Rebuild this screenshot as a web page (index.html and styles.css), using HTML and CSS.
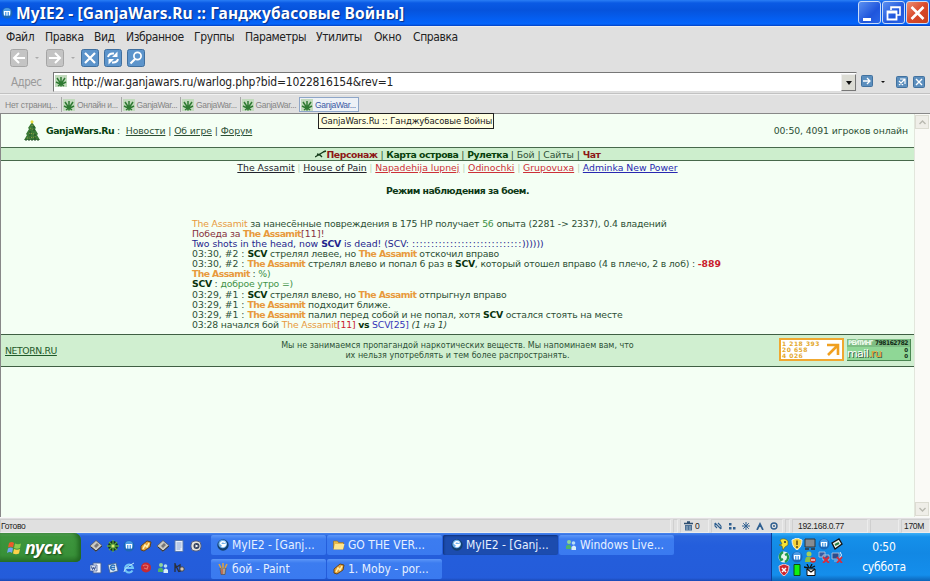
FILE: index.html
```html
<!DOCTYPE html>
<html lang="ru">
<head>
    <meta charset="UTF-8">
    <title>GanjaWars.Ru :: Ганджубасовые Войны</title>
    <link rel="stylesheet" href="styles.css">
</head>
<body>
    <svg class="defs" width="0" height="0">
        <symbol id="leaf" viewBox="0 0 12 12">
            <rect width="12" height="12" fill="#c2dabd"/>
            <path d="M6 11.500V2M6 9L2 3M6 9l4-6M6 9.500L1 7M6 9.500L11 7M6 9l-3 2M6 9l3 2" stroke="#2f7a33" stroke-width="1.500" fill="none"/>
        </symbol>
        <symbol id="disk" viewBox="0 0 12 12">
            <path d="M0 6l6-5.500 6 5L6 11.500z" fill="#c9c9c4" stroke="#555" stroke-width=".8"/>
            <path d="M1 7l5 4 6-5" stroke="#333" fill="none"/>
            <path d="M4 6l3-3 2 2-3 3z" fill="#777"/>
        </symbol>
        <symbol id="amp" viewBox="0 0 12 12">
            <path d="M1 6l6-5 4 1-1 5-6 4-3-1z" fill="#e8a33a" stroke="#5c3c12" stroke-width=".9"/>
            <path d="M3 9l2-4 2 2 2-4" stroke="#fff3b0" stroke-width="1.500" fill="none"/>
        </symbol>
        <symbol id="myie" viewBox="0 0 12 12">
            <circle cx="6" cy="6" r="5.500" fill="#1c66b5"/>
            <circle cx="6" cy="5" r="4" fill="#4c9ce6"/>
            <path d="M3.500 8.500V4.500h5v4M6 4.500v4" stroke="#fff" fill="none" stroke-width="1.200"/>
        </symbol>
        <symbol id="globe" viewBox="0 0 12 12">
            <circle cx="6" cy="6" r="5.700" fill="#12406f"/>
            <circle cx="5.700" cy="5" r="4.300" fill="#6fb2ea"/>
            <path d="M8.500 3.500q-4-2-5 1 1 2 5 1-1 3-4 1.500" stroke="#fff" stroke-width="1.600" fill="none"/>
        </symbol>
        <symbol id="people" viewBox="0 0 12 12">
            <circle cx="4" cy="3" r="2" fill="#8fd49a"/>
            <circle cx="8.500" cy="4" r="1.800" fill="#b6ddf5"/>
            <path d="M1 10V7q3-3 5 0v3z" fill="#4eb46a"/>
            <path d="M6.500 11V8q2.500-3 4.500 0v3z" fill="#d8eefa"/>
        </symbol>
    </svg>

    <div class="titlebar">
        <svg class="title-icon" width="12" height="12"><use href="#myie"/></svg>
        <div class="title">MyIE2 - [GanjaWars.Ru :: Ганджубасовые Войны]</div>
        <div class="win-btn">
            <svg width="21" height="22" viewBox="0 0 21 22"><path d="M4 17.500h8" stroke="#fff" stroke-width="3"/></svg>
        </div>
        <div class="win-btn">
            <svg width="21" height="22" viewBox="0 0 21 22"><path d="M8 8V5h9v8h-3M8 5.500h9" stroke="#fff" stroke-width="1.600" fill="none"/><path d="M4.500 9.500h9v8h-9zM4 10.500h9.500" stroke="#fff" stroke-width="1.800" fill="none"/></svg>
        </div>
        <div class="win-btn close">
            <svg width="21" height="22" viewBox="0 0 21 22"><path d="M4.500 5l12 12M16.500 5l-12 12" stroke="#fff" stroke-width="2.600"/></svg>
        </div>
    </div>

    <div class="menubar">
        <span class="m1">Файл</span>
        <span class="m2">Правка</span>
        <span class="m3">Вид</span>
        <span class="m4">Избранное</span>
        <span class="m5">Группы</span>
        <span class="m6">Параметры</span>
        <span class="m7">Утилиты</span>
        <span class="m8">Окно</span>
        <span class="m9">Справка</span>
    </div>

    <div class="toolbar">
        <svg class="nav" width="18" height="18" viewBox="0 0 18 18"><rect x=".5" y=".5" width="17" height="17" rx="2" fill="#c4c4c4" stroke="#a5a5a5"/><path d="M15 9H4M9 4L4 9l5 5" stroke="#fff" stroke-width="2" fill="none"/></svg>
        <i class="tick"></i>
        <svg class="nav" width="18" height="18" viewBox="0 0 18 18"><rect x=".5" y=".5" width="17" height="17" rx="2" fill="#c4c4c4" stroke="#a5a5a5"/><path d="M3 9h11M9 4l5 5-5 5" stroke="#fff" stroke-width="2" fill="none"/></svg>
        <i class="tick"></i>
        <svg class="tool" width="18" height="18" viewBox="0 0 18 18"><rect x=".5" y=".5" width="17" height="17" rx="2" fill="#5c94cb" stroke="#3f6f9f"/><path d="M4 4l10 10M14 4L4 14" stroke="#fff" stroke-width="2.200"/></svg>
        <svg class="tool" width="18" height="18" viewBox="0 0 18 18"><rect x=".5" y=".5" width="17" height="17" rx="2" fill="#5c94cb" stroke="#3f6f9f"/><path d="M4 8q1-4 6-3.500M14 10q-1 4-6 3.500" stroke="#fff" stroke-width="2" fill="none"/><path d="M13.500 2.500v5.500h-5.500zM4.500 15.500v-5.500h5.500z" fill="#fff"/></svg>
        <svg class="tool" width="18" height="18" viewBox="0 0 18 18"><rect x=".5" y=".5" width="17" height="17" rx="2" fill="#5c94cb" stroke="#3f6f9f"/><circle cx="10.500" cy="7" r="3.600" stroke="#fff" stroke-width="1.700" fill="none"/><path d="M8 10l-4.500 4.500" stroke="#fff" stroke-width="2.200"/></svg>
    </div>

    <div class="address">
        <label>Адрес</label>
        <div class="url">
            <svg width="12" height="12"><use href="#leaf"/></svg>
            <span>http://war.ganjawars.ru/warlog.php?bid=1022816154&amp;rev=1</span>
            <button class="drop"></button>
        </div>
        <svg class="go" width="12" height="12" viewBox="0 0 12 12"><rect x=".5" y=".5" width="11" height="11" rx="1" fill="#5c8fbe" stroke="#41719f"/><path d="M2 6h7M6 3l3 3-3 3" stroke="#fff" stroke-width="1.300" fill="none"/></svg>
        <i class="tick dark"></i>
        <svg class="pop" width="12" height="12" viewBox="0 0 12 12"><rect x=".5" y=".5" width="11" height="11" rx="1" fill="#5c8fbe" stroke="#41719f"/><path d="M4 3h5v5M9 3L6 6M3 5l4 4M7 5L3 9" stroke="#fff" stroke-width="1.200" fill="none"/></svg>
        <svg width="12" height="12" viewBox="0 0 12 12"><rect x=".5" y=".5" width="11" height="11" rx="1" fill="#5c8fbe" stroke="#41719f"/><path d="M3 3l6 6M9 3L3 9" stroke="#fff" stroke-width="1.400"/></svg>
    </div>

    <div class="tabs">
        <div class="tab first">Нет страниц...</div>
        <div class="tab"><svg width="12" height="12"><use href="#leaf"/></svg><span>Онлайн и...</span></div>
        <div class="tab"><svg width="12" height="12"><use href="#leaf"/></svg><span>GanjaWar...</span></div>
        <div class="tab"><svg width="12" height="12"><use href="#leaf"/></svg><span>GanjaWar...</span></div>
        <div class="tab"><svg width="12" height="12"><use href="#leaf"/></svg><span>GanjaWar...</span></div>
        <div class="tab active"><svg width="12" height="12"><use href="#leaf"/></svg><span>GanjaWar...</span>
            <div class="tooltip">GanjaWars.Ru :: Ганджубасовые Войны</div>
        </div>
    </div>

    <div class="view">
        <div class="page">
            <div class="header">
                <svg width="18" height="22" viewBox="0 0 18 22">
                    <path d="M9 2l4 6-1 1 3 5-1 1 3 5H1l3-5-1-1 3-5-1-1z" fill="#3b7a36"/>
                    <path d="M9 3v4M7 8l4 2M6 13l5 1M4 18l9-1" stroke="#9a9e48" stroke-dasharray="1 1"/>
                    <path d="M11 6v5M7 11v7M12 14v5M2 20h14" stroke="#204b26" stroke-dasharray="2 1"/>
                    <circle cx="9" cy="1.800" r="1.500" fill="#e5dc3f"/>
                </svg>
                <div class="site-links"><b>GanjaWars.Ru</b> :&nbsp; <a>Новости</a> | <a>Об игре</a> | <a>Форум</a></div>
                <div class="online">00:50, 4091 игроков онлайн</div>
            </div>
            <div class="nav-strip">
                <svg width="12" height="8" viewBox="0 0 12 8"><path d="M0 7l5-3 5-3M4 4l3 3M2 4l3 1M8 2l3-1" stroke="#163d1b" stroke-width="1.400" fill="none"/></svg><span><b class="maroon">Персонаж</b> | <b>Карта острова</b> | <b>Рулетка</b> | Бой | Сайты | <b class="maroon">Чат</b></span>
            </div>
            <div class="clans"><a class="black">The Assamit</a> <i>|</i> <a class="black">House of Pain</a> <i>|</i> <a class="red">Napadehija lupnej</a> <i>|</i> <a class="red">Odinochki</a> <i>|</i> <a class="red">Grupovuxa</a> <i>|</i> <a class="blue">Adminka New Power</a></div>
            <div class="mode">Режим наблюдения за боем.</div>
            <div class="log">
                <div><span class="orange">The Assamit</span> за нанесённые повреждения в 175 HP получает <span class="green">56</span> опыта (2281 -&gt; 2337), 0.4 владений</div>
                <div class="wine">Победа за <b class="orange">The Assamit</b><span class="level">[11]</span>!</div>
                <div class="navy">Two shots in the head, now <b>SCV</b> is dead! (SCV: <span class="dots">:::::::::::::::::::::::::::::</span>))))))</div>
                <div><span class="time">03:30, #2 : </span><b class="dark">SCV</b> стрелял левее, но <b class="orange">The Assamit</b> отскочил вправо</div>
                <div><span class="time">03:30, #2 : </span><b class="orange">The Assamit</b> стрелял влево и попал 6 раз в <b class="dark">SCV</b>, который отошел вправо (4 в плечо, 2 в лоб) : <b class="crimson">-889</b></div>
                <div><b class="orange">The Assamit</b> : <span class="green">%)</span></div>
                <div><b class="dark">SCV</b> : <span class="green">доброе утро =)</span></div>
                <div><span class="time">03:29, #1 : </span><b class="dark">SCV</b> стрелял влево, но <b class="orange">The Assamit</b> отпрыгнул вправо</div>
                <div><span class="time">03:29, #1 : </span><b class="orange">The Assamit</b> подходит ближе.</div>
                <div><span class="time">03:29, #1 : </span><b class="orange">The Assamit</b> палил перед собой и не попал, хотя <b class="dark">SCV</b> остался стоять на месте</div>
                <div>03:28 начался бой <span class="orange">The Assamit</span><span class="crimson">[11]</span> <b class="dark">vs</b> <span class="link-blue">SCV[25]</span> <em>(1 на 1)</em></div>
            </div>
            <div class="footer">
                <a>NETORN.RU</a>
                <p>Мы не занимаемся пропагандой наркотических веществ. Мы напоминаем вам, что<br>их нельзя употреблять и тем более распространять.</p>
                <div class="counter">
                    <div>1 218 393<br>20 658<br>4 026</div>
                    <svg width="14" height="14" viewBox="0 0 14 14"><path d="M1 2h11v10M12 2L2 12" stroke="#f0a020" stroke-width="2.600" fill="none"/></svg>
                </div>
                <div class="rating">
                    <div class="rating-top"><span>РЕЙТИНГ</span><b>798162782</b></div>
                    <div class="rating-bottom"><span class="mail">mail<em>.ru</em></span><b>0<br>0</b></div>
                </div>
            </div>
        </div>
        <div class="scrollbar">
            <div class="arrow"><svg width="7" height="5" viewBox="0 0 7 5"><path d="M.5 4l3-3 3 3" stroke="#b9b9b0" stroke-width="1.400" fill="none"/></svg></div>
            <div class="arrow"><svg width="7" height="5" viewBox="0 0 7 5"><path d="M.5 1l3 3 3-3" stroke="#b9b9b0" stroke-width="1.400" fill="none"/></svg></div>
        </div>
    </div>

    <div class="status">
        <div class="s-ready">Готово</div>
        <div class="s-gap"></div>
        <div class="s-trash"><svg width="9" height="10" viewBox="0 0 9 10"><path d="M0 2.500h9M3 1h3" stroke="#2d4e70" stroke-width="1.300"/><path d="M1 4h7v5.500H1z" fill="#4b7096"/><path d="M3 5v4M6 5v4" stroke="#c6d6e4" stroke-width=".7"/></svg><span>0</span></div>
        <div class="s-icons">
            <svg width="8" height="8" viewBox="0 0 8 8"><path d="M1 1l6 6M1 1v3l2 2M4 1l3 3M7 7V4" stroke="#2f5f90" stroke-width="1.100" fill="none"/></svg>
            <svg width="8" height="8" viewBox="0 0 8 8"><path d="M1 1h2.500v2.500H1zM1 5h2.500v2.500H1zM5 5h2.500v2.500H5z" fill="#2f5f90"/></svg>
            <svg width="8" height="8" viewBox="0 0 8 8"><path d="M4 0v8M0 4h8M1.200 1.200l5.600 5.600M6.800 1.200L1.200 6.800" stroke="#2f5f90"/></svg>
            <svg width="8" height="8" viewBox="0 0 8 8"><path d="M1 8l3-6 3 6M4 2v3" stroke="#2f5f90" stroke-width="1.700" fill="none"/></svg>
            <svg width="8" height="8" viewBox="0 0 8 8"><circle cx="4" cy="4" r="3" stroke="#2f5f90" stroke-width="1.400" fill="none"/><circle cx="4" cy="4" r="1" fill="#2f5f90"/></svg>
        </div>
        <div class="s-gap"></div>
        <div class="s-ip">192.168.0.77</div>
        <div class="s-blank"></div>
        <div class="s-mem">170M</div>
    </div>

    <div class="taskbar">
        <div class="start">
            <svg width="15" height="14" viewBox="0 0 15 14"><path d="M2 2q3-2 5 0L6 6.500q-2-1.500-5 0z" fill="#ec5a2c"/><path d="M8 2.500q3 1.500 6 0l-1 4.500q-3 1.500-6 0z" fill="#8ccb4c"/><path d="M1 7.500q3-2 5 0L5 12q-2-2-5 0z" fill="#6ea7f2"/><path d="M7 8q3 1.500 6 0l-1 4.500q-3 1.500-6 0z" fill="#fbd24a"/></svg>
            <span>пуск</span>
        </div>
        <div class="quick">
            <svg width="12" height="12"><use href="#disk"/></svg>
            <svg width="12" height="12" viewBox="0 0 12 12"><circle cx="6" cy="6" r="5" fill="#15351a"/><path d="M6 0v12M0 6h12M2 2l8 8M10 2l-8 8" stroke="#59a844" stroke-width="1.300"/><circle cx="6" cy="6" r="1.500" fill="#dce96e"/></svg>
            <svg width="12" height="12"><use href="#myie"/></svg>
            <svg width="12" height="12"><use href="#amp"/></svg>
            <svg width="12" height="12"><use href="#disk"/></svg>
            <svg width="12" height="12" viewBox="0 0 12 12"><path d="M2 .5h8v11H2z" fill="#e9f0fb" stroke="#5978ad"/><path d="M3.500 3h5M3.500 5h5M3.500 7h5M3.500 9h4" stroke="#6f8fc8" stroke-width=".8"/></svg>
            <svg width="12" height="12" viewBox="0 0 12 12"><rect x="1" y="1" width="10" height="10" rx="4" fill="#e6e3da" stroke="#525e80"/><circle cx="6.500" cy="6" r="3" fill="#34425f"/><path d="M5.500 4.500l3 1.500-3 1.500z" fill="#fff"/></svg>
            <svg width="12" height="12" viewBox="0 0 12 12"><path d="M3 1h8v10H3z" fill="#f2f4fa" stroke="#47639b"/><path d="M0 3h7v6H0z" fill="#d5def1" stroke="#3a5594" stroke-width=".7"/><path d="M1.500 4.500l1 3 1-2 1 2 1-3" stroke="#2a4586" fill="none"/></svg>
            <svg width="12" height="12" viewBox="0 0 12 12"><path d="M1 3l8-2 2 8-8 2z" fill="#d8e6f5" stroke="#41618e" stroke-width=".8"/><path d="M8 4a2.500 2.500 0 1 0 0 3M4 5.500h4" stroke="#2c73bd" stroke-width="1.300" fill="none"/></svg>
            <svg width="12" height="12" viewBox="0 0 12 12"><path d="M9.500 8.500a4 4 0 1 1 .5-2.500H3" stroke="#72c6f7" stroke-width="2" fill="none"/><path d="M1 10Q1 6 11 1" stroke="#bfe4fb" fill="none"/></svg>
            <svg width="12" height="12" viewBox="0 0 12 12"><circle cx="6" cy="5.500" r="5" fill="#c42a35"/><path d="M3 4q2-2 5 0l-1 3-3-1" stroke="#e77167" stroke-width="1.200" fill="none"/></svg>
            <svg width="12" height="12"><use href="#people"/></svg>
            <svg width="12" height="12" viewBox="0 0 12 12"><path d="M2 1v9M2 6l5-3v7M2 2l4 8" stroke="#2c2f38" stroke-width="1.300" fill="none"/><circle cx="9" cy="7" r="2.200" fill="#d7c8b0" stroke="#3d414f"/></svg>
        </div>
        <div class="tasks">
            <div class="task"><svg width="12" height="12"><use href="#globe"/></svg><span>MyIE2 - [Ganj...</span></div>
            <div class="task"><svg width="12" height="12" viewBox="0 0 12 12"><path d="M.5 2h4l1 1.500h5V10H.5z" fill="#e7b94b" stroke="#8e6a1c" stroke-width=".6"/><path d="M2 5h9.500L10 10.500H.5z" fill="#fce68f"/></svg><span>GO THE VER...</span></div>
            <div class="task current"><svg width="12" height="12"><use href="#globe"/></svg><span>MyIE2 - [Ganj...</span></div>
            <div class="task"><svg width="12" height="12"><use href="#people"/></svg><span>Windows Live...</span></div>
            <div class="task"><svg width="12" height="12" viewBox="0 0 12 12"><path d="M3 5h6l-1 6.500H4z" fill="#b4a48c" stroke="#4c4540" stroke-width=".6"/><path d="M4 5L2 1M6 5V0M8 5l2-4" stroke="#e0a43e" stroke-width="1.500"/><path d="M5 6v5" stroke="#c23d2a"/></svg><span>бой - Paint</span></div>
            <div class="task"><svg width="12" height="12"><use href="#amp"/></svg><span>1. Moby - por...</span></div>
        </div>
        <div class="tray">
            <div class="tray-icons">
                <svg width="12" height="12" viewBox="0 0 12 12"><path d="M2 2q4-3 8 1v4L7 9l-2 3-1-4-3-1 3-1z" fill="#f6e234" stroke="#5e5a20" stroke-width=".6"/><circle cx="7" cy="4" r="1" fill="#333"/></svg>
                <svg width="12" height="12" viewBox="0 0 12 12"><path d="M6 0l5 2q0 7-5 10Q1 9 1 2z" fill="#f5d43c" stroke="#e8f0f0"/><path d="M6 2.500V7M6 8v2" stroke="#5c4810" stroke-width="1.500"/></svg>
                <svg width="12" height="12" viewBox="0 0 12 12"><path d="M1 1h10v8H1z" fill="#868c92" stroke="#2f363c"/><path d="M1 11h4M7 11h4" stroke="#333" stroke-width="1.500"/></svg>
                <svg width="12" height="12"><use href="#myie"/></svg>
                <svg width="12" height="12" viewBox="0 0 12 12"><path d="M1 5l7-4 3 5-7 5z" fill="#eef2e8" stroke="#111" stroke-width="1.300"/><path d="M4 7l4-2" stroke="#2a7f45" stroke-width="2"/></svg>
                <svg width="12" height="12" viewBox="0 0 12 12"><circle cx="6" cy="6" r="5.500" fill="#e9f5ec"/><path d="M5 1Q0 4 3 9l2-1M7 11q5-3 2-8L7 4" stroke="#20994a" stroke-width="2.200" fill="none"/></svg>
                <svg width="12" height="12"><use href="#myie"/></svg>
                <svg width="12" height="12" viewBox="0 0 12 12"><circle cx="5" cy="3" r="2.500" fill="#a6cf5a"/><path d="M1 11q0-6 4-5 4 0 4 5z" fill="#8abf48"/><circle cx="9" cy="9" r="2.800" fill="#d42c2c"/><path d="M7 9h4" stroke="#fff" stroke-width="1.200"/></svg>
                <svg width="12" height="12" viewBox="0 0 12 12"><path d="M1 1h6v5H1zM5 4h6v5H5z" fill="#355ca4" stroke="#c0cce0" stroke-width=".8"/><path d="M5 6l6 6M11 6l-6 6" stroke="#d92c3c" stroke-width="1.800"/></svg>
                <svg width="12" height="12" viewBox="0 0 12 12"><path d="M1 2h7v6H1zM3 10h5" fill="#2c4c8c" stroke="#c0cce0" stroke-width=".8"/><path d="M9 1q3 3 0 6" stroke="#e2efff" fill="none"/><path d="M6 6l5 6M11 6l-5 6" stroke="#d92c3c" stroke-width="1.800"/></svg>
                <svg width="12" height="12" viewBox="0 0 12 12"><path d="M6 0l5 2q0 7-5 10Q1 9 1 2z" fill="#ce2730" stroke="#ecc8cc"/><path d="M4 4l4 4M8 4L4 8" stroke="#fff" stroke-width="1.500"/></svg>
                <svg width="12" height="12" viewBox="0 0 12 12"><path d="M3 .5h6v11H3z" fill="#10f010" stroke="#134b13"/></svg>
                <svg width="12" height="12" viewBox="0 0 12 12"><path d="M3 5h8v6.500H3z" fill="#fff" stroke="#111"/><path d="M3 5l4 3 4-3M0 3l4 1M3 0l2 4M8 0L6 4M11 2L7 4" stroke="#111" stroke-width="1.300" fill="none"/></svg>
            </div>
            <div class="clock">0:50<br>суббота</div>
        </div>
    </div>
</body>
</html>
```

FILE: styles.css
```css
* {
    box-sizing: border-box;
}
body {
    margin: 0;
    width: 930px;
    height: 581px;
    overflow: hidden;
    display: flex;
    flex-direction: column;
    background: #e0e0e0;
    font-family: "DejaVu Sans Condensed", "DejaVu Sans", sans-serif;
    color: #222;
}
svg {
    display: block;
    flex: none;
}
.defs {
    position: absolute;
}

/* title bar */
.titlebar {
    height: 26px;
    flex: none;
    display: flex;
    align-items: center;
    gap: 3px;
    padding: 0 1px 0 1px;
    background: linear-gradient(#2a7ef5 0, #0a5ae4 3px, #0653dc 10px, #0460f4 20px, #0566fb 24px, #0340c0 26px);
}
.title {
    flex: 1;
    color: #fff;
    font-family: "Noto Sans", sans-serif;
    font-size: 15.500px;
    font-weight: bold;
    letter-spacing: 0.180px;
    white-space: nowrap;
    text-shadow: 1px 1px 1px #0a2f86;
}
.win-btn {
    width: 23px;
    height: 23px;
    margin-top: -1px;
    border: 1px solid #c9dcf8;
    border-radius: 3px;
    background: linear-gradient(135deg, #5b90f0, #1f55dc 60%, #2a66e8);
    margin-left: -2px;
}
.win-btn.close {
    background: linear-gradient(135deg, #ec8f72, #d9482a 50%, #c7411f);
}

/* menu and tool bars */
.menubar {
    height: 21px;
    flex: none;
    display: flex;
    align-items: center;
    padding-left: 6px;
    font-size: 12px;
    letter-spacing: -0.400px;
    border-top: 1px solid #eee;
    white-space: nowrap;
}
.m1 { width: 39px; }
.m2 { width: 49px; }
.m3 { width: 32px; }
.m4 { width: 68px; }
.m5 { width: 51px; }
.m6 { width: 71px; }
.m7 { width: 58px; }
.m8 { width: 39px; }
.toolbar {
    height: 24px;
    flex: none;
    display: flex;
    align-items: center;
    padding: 0 0 2px 10px;
}
.tick {
    width: 0;
    height: 0;
    border: 2px solid transparent;
    border-top-color: #aaa;
    border-bottom: 0;
    margin: 0 7px;
}
.tick + .tool {
    margin-left: -1px;
}
.tick.dark {
    border-top-color: #111;
    margin: 0 11px 0 8px;
}
.tool {
    margin-right: 5px;
}
.address {
    height: 23px;
    flex: none;
    display: flex;
    align-items: center;
    padding-left: 11px;
    border-bottom: 1px solid #c2c2c2;
}
.address label {
    width: 42px;
    font-size: 11.500px;
    letter-spacing: -0.500px;
    color: #9a9a9a;
}
.url {
    width: 804px;
    height: 20px;
    display: flex;
    align-items: center;
    background: #fff;
    border: 1px solid #777;
    border-right-color: #ddd;
    border-bottom-color: #ddd;
    font-size: 12px;
    letter-spacing: -0.180px;
    margin-right: 4px;
    padding-left: 1px;
}
.url svg {
    margin-top: -3px;
}
.url span {
    flex: 1;
    padding-left: 5px;
    margin-top: -1px;
}
.drop {
    width: 15px;
    height: 17px;
    padding: 0;
    background: #dcdcd4;
    border: 1px solid #eee;
    border-right-color: #777;
    border-bottom-color: #777;
}
.drop::after {
    content: "";
    display: block;
    margin: 1px auto 0;
    width: 0;
    border: 3px solid transparent;
    border-top: 4px solid #111;
    border-bottom: 0;
}
.go {
    margin-top: -3px;
}
.pop {
    margin-right: 5px;
}

/* page tabs */
.tabs {
    height: 19px;
    flex: none;
    display: flex;
    padding: 2px 0 1px 5px;
    border-top: 1px solid #f2f2f2;
    font-family: "Liberation Sans", sans-serif;
    font-size: 8.500px;
    color: #858585;
}
.tab {
    position: relative;
    width: 59.500px;
    display: flex;
    align-items: center;
    gap: 2px;
    padding-left: 1px;
    border-left: 1px solid #a9a9a9;
    white-space: nowrap;
    letter-spacing: -0.350px;
}
.tab.first {
    width: 56px;
    padding-left: 0;
    border-left: 0;
    letter-spacing: -0.250px;
}
.tab.active {
    color: #3a5aa4;
    background: #edf1f6;
    border: 1px solid #8ea6c8;
}
.tooltip {
    position: absolute;
    z-index: 2;
    left: 18px;
    top: 15px;
    width: 176px;
    height: 16px;
    padding-left: 2px;
    line-height: 14px;
    background: #ffffe1;
    border: 1px solid #222;
    color: #222;
    font-family: "DejaVu Sans Condensed", sans-serif;
    font-size: 9.500px;
    letter-spacing: -0.100px;
}

/* document area */
.view {
    height: 404px;
    flex: none;
    display: flex;
    border-top: 1px solid #888;
    border-left: 1px solid #888;
    background: #f4fff4;
}
.page {
    width: 913px;
    font-family: "DejaVu Sans", Verdana, sans-serif;
    font-size: 9.300px;
    color: #2d4f35;
    white-space: nowrap;
}
.page a {
    text-decoration: underline;
}
.header {
    height: 33px;
    display: flex;
    align-items: center;
    padding: 0 6px 0 22px;
    letter-spacing: -0.110px;
}
.header b {
    color: #063f0e;
    letter-spacing: -0.450px;
}
.site-links {
    padding-left: 5px;
}
.online {
    margin-left: auto;
}
.nav-strip {
    height: 14px;
    display: flex;
    align-items: center;
    justify-content: center;
    background: #cdeecd;
    border-top: 1px solid #47694b;
    border-bottom: 1px solid #47694b;
    letter-spacing: -0.090px;
}
.nav-strip b {
    color: #07400b;
    letter-spacing: -0.450px;
}
.nav-strip .maroon {
    color: #8c1616;
}
.clans {
    height: 14px;
    line-height: 13px;
    text-align: center;
}
.clans i {
    color: #b5d0b5;
    font-style: normal;
    font-size: 8px;
}
.black { color: #22222c; }
.red { color: #cc3038; }
.blue { color: #2828b0; }
.mode {
    margin-top: 9px;
    height: 14px;
    line-height: 14px;
    text-align: center;
    font-weight: bold;
    letter-spacing: -0.520px;
    color: #0c3814;
}
.log {
    height: 136px;
    padding: 20.500px 0 0 191px;
    line-height: 10.150px;
    letter-spacing: -0.170px;
}
.log b {
    letter-spacing: -0.600px;
}
.log b.dark,
.log .navy b {
    letter-spacing: -0.300px;
}
.log b.crimson,
.time,
.navy {
    letter-spacing: 0;
}
.dots {
    letter-spacing: 0.660px;
}
.level { letter-spacing: 0.200px; }
.orange { color: #e89a3c; }
.green { color: #3f9247; }
.wine { color: #86303c; }
.navy { color: #24248c; }
.dark { color: #08330d; }
.crimson { color: #c9202c; }
.link-blue { color: #3434b8; }
.footer {
    height: 33px;
    display: flex;
    align-items: center;
    padding: 0 3px 0 4px;
    background: #d0efd0;
    border-top: 1px solid #3f5f43;
    border-bottom: 1px solid #3f5f43;
}
.footer a {
    width: 142px;
    color: #1f5a2a;
    letter-spacing: -0.400px;
}
.footer p {
    margin: 0;
    width: 621px;
    text-align: center;
    font-size: 8px;
    line-height: 10px;
}
.counter {
    width: 65px;
    height: 23px;
    margin-left: auto;
    margin-top: -2px;
    display: flex;
    justify-content: space-between;
    align-items: center;
    padding: 0 2px 0 1px;
    border: 2px solid #f0a830;
    background: #fff;
    color: #e3a82c;
    font-size: 6px;
    font-weight: bold;
    line-height: 6px;
    letter-spacing: 0.500px;
}
.rating {
    width: 64px;
    height: 22px;
    margin-left: 3px;
    margin-top: -2px;
    background: #8fd796;
    border-right: 1px solid #4b8752;
    border-bottom: 1px solid #4b8752;
    color: #122c16;
}
.rating-top {
    display: flex;
    justify-content: space-between;
    height: 8px;
    padding: 0 2px 0 1px;
    font-size: 6.500px;
    line-height: 9px;
    font-family: "DejaVu Sans Condensed", sans-serif;
    letter-spacing: -0.400px;
    background: #7ebd84;
}
.rating-top span {
    color: #f0fbf0;
    font-weight: bold;
    letter-spacing: -0.900px;
}
.rating-bottom {
    display: flex;
    justify-content: space-between;
    padding-right: 2px;
    font-size: 5.500px;
    line-height: 6px;
}
.mail {
    font-size: 11px;
    line-height: 13px;
    letter-spacing: -0.600px;
    color: #fff;
    text-shadow: 1px 1px 0 #3a5c3e;
}
.mail em {
    font-style: normal;
    color: #f0a030;
}
.scrollbar {
    width: 16px;
    display: flex;
    flex-direction: column;
    justify-content: space-between;
    padding: 1px 1px 1px 0;
    background: #fafaf6;
    border-left: 1px solid #e2e6dc;
}
.arrow {
    height: 14px;
    display: flex;
    align-items: center;
    justify-content: center;
    background: #efeee8;
    border: 1px solid #dcdcd2;
}

/* status bar */
.status {
    height: 16px;
    flex: none;
    display: flex;
    padding-top: 1px;
    border-top: 1px solid #f8f8f8;
    font-family: "Liberation Sans", sans-serif;
    font-size: 8.500px;
    letter-spacing: -0.300px;
}
.status > div {
    display: flex;
    align-items: center;
    border: 1px solid #cfcfcf;
    border-right-color: #ececec;
    border-bottom-color: #ececec;
    margin-right: 2px;
}
.s-ready { width: 671px; }
.s-gap { width: 5px; }
.s-trash {
    width: 29px;
    gap: 2px;
    padding-left: 3px;
}
.s-icons {
    width: 72px;
    gap: 6px;
    padding-left: 2px;
}
.s-ip {
    width: 76px;
    padding-left: 5px;
}
.s-blank { width: 29px; }
.status > .s-mem {
    flex: 1;
    padding-left: 2px;
    margin-right: 0;
}

/* taskbar */
.taskbar {
    flex: 1;
    display: flex;
    background: linear-gradient(#4886ee 0, #2a64dd 3px, #245edc 12px, #245cda 45px, #1a48b4 48px);
    color: #fff;
}
.start {
    width: 81px;
    height: 29px;
    display: flex;
    align-items: center;
    gap: 3px;
    padding-left: 7px;
    border-radius: 0 7px 5px 0;
    background: linear-gradient(#5cac5c 0, #3d953d 4px, #389038 22px, #2a742a 29px);
    box-shadow: inset -3px 0 4px #216621;
    font-family: "Noto Sans", sans-serif;
    font-size: 18px;
    font-weight: bold;
    font-style: italic;
    line-height: 20px;
    text-shadow: 1px 1px 2px #143f14;
}
.start span {
    margin-top: -1px;
}
.quick {
    width: 119px;
    margin-left: 9px;
    height: 41px;
    margin-top: 7px;
    display: grid;
    grid-template-columns: repeat(7, 16.700px);
    grid-template-rows: 22px 12px;
}
.tasks {
    width: 464px;
    margin: 2px 0 0 2px;
    display: grid;
    grid-template-columns: repeat(4, 115px);
    grid-template-rows: 20px 20px;
    gap: 4px 1px;
    font-size: 12px;
    white-space: nowrap;
}
.task {
    display: flex;
    align-items: center;
    gap: 3px;
    padding-left: 6px;
    border-radius: 2px;
    background: linear-gradient(#5c96f8, #3c7cf0 4px, #3a7af0);
    color: #e6f0ff;
}
.task.current {
    background: #1c4cae;
    box-shadow: inset 1px 1px 2px #10317a;
    padding-left: 8px;
}
.tray {
    flex: 1;
    display: flex;
    margin-left: 96px;
    border-left: 1px solid #0b3f9a;
    background: linear-gradient(#3cb0f8 0, #1590ea 4px, #1288e4 20px, #148eec 42px, #0c64b8 48px);
}
.tray-icons {
    padding: 5px 0 0 6px;
    width: 74px;
    display: grid;
    grid-template-columns: repeat(5, 13.200px);
    grid-auto-rows: 13px;
    align-content: start;
}
.clock {
    width: 76px;
    padding-top: 4px;
    text-align: center;
    font-size: 12px;
    letter-spacing: -0.200px;
    line-height: 20px;
}
```
